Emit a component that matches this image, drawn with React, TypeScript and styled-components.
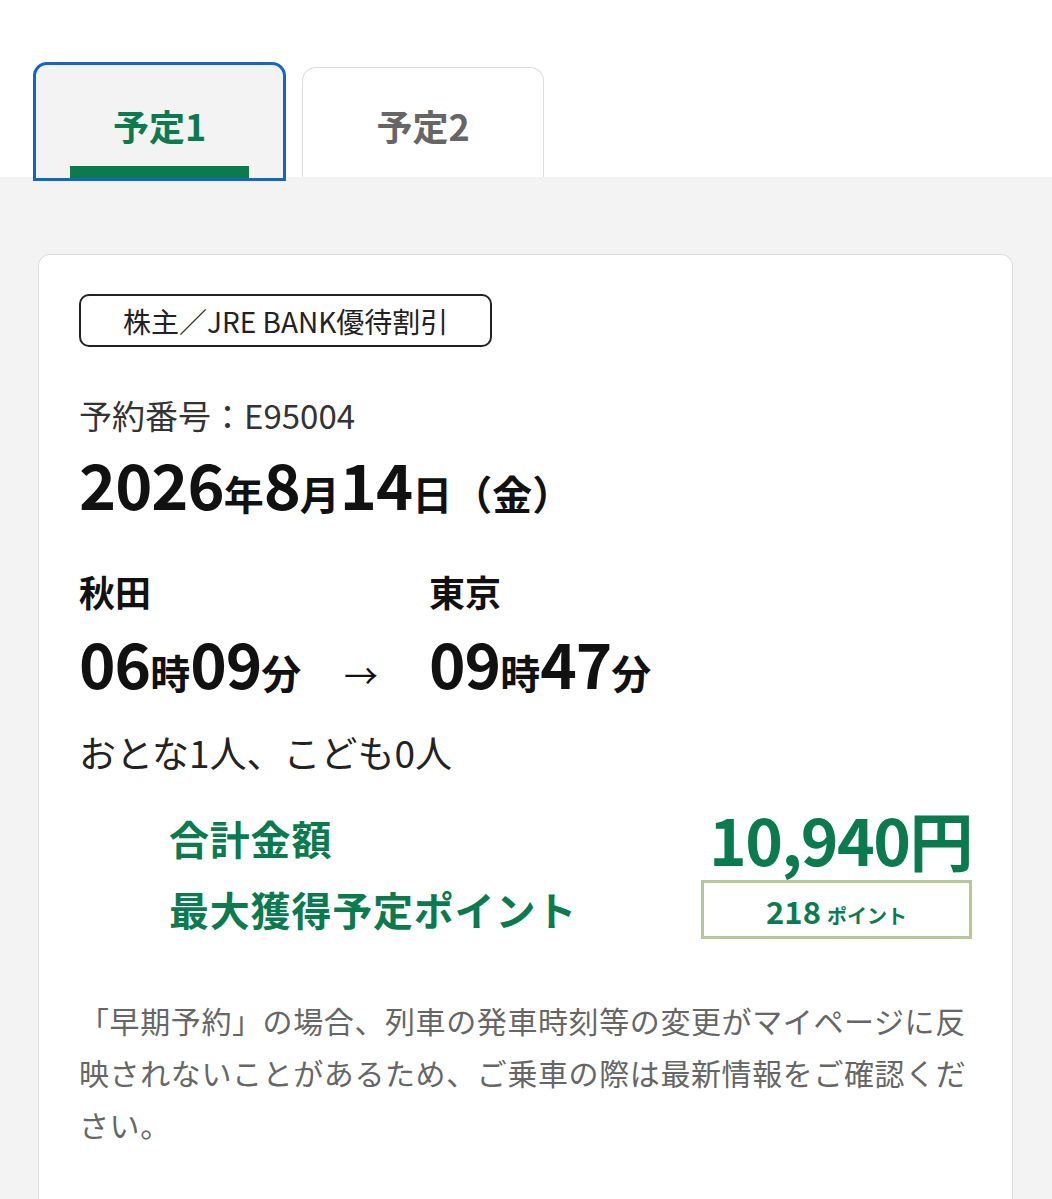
import styled, { createGlobalStyle } from "styled-components";

const GREEN = "#0b7a4f";
const FONT = `"Noto Sans CJK JP", "Noto Sans", sans-serif`;

const GlobalStyle = createGlobalStyle`
  html, body {
    margin: 0;
    padding: 0;
    background: #ffffff;
    font-family: ${FONT};
  }
`;

const Page = styled.div`
  width: 1052px;
  height: 1199px;
  background: #ffffff;
  overflow: hidden;
  display: flex;
  flex-direction: column;
`;

const TabBar = styled.ul`
  list-style: none;
  margin: 0;
  padding: 62px 0 0 33px;
  display: flex;
  align-items: flex-end;
  gap: 16px;
  height: 177px;
  box-sizing: border-box;
  flex-shrink: 0;
`;

const Tab = styled.li<{ $active?: boolean }>`
  position: relative;
  z-index: 1;
  box-sizing: border-box;
  display: flex;
  justify-content: center;
  align-items: center;
  width: ${(p) => (p.$active ? "253px" : "242px")};
  height: ${(p) => (p.$active ? "119px" : "110px")};
  margin-bottom: ${(p) => (p.$active ? "-4px" : "0")};
  padding-top: ${(p) => (p.$active ? "6px" : "4px")};
  border: ${(p) => (p.$active ? "3px solid #1466c6" : "1.5px solid #dcdcdc")};
  border-bottom-width: ${(p) => (p.$active ? "3px" : "0")};
  border-radius: 14px 14px 0 0;
  background: ${(p) => (p.$active ? "#f3f3f3" : "#ffffff")};
  color: ${(p) => (p.$active ? GREEN : "#666666")};
  font-size: 36px;
  font-weight: 700;

  .bar {
    position: absolute;
    left: 34px;
    right: 34px;
    bottom: 0;
    height: 12px;
    background: ${GREEN};
  }
`;

const Panel = styled.div`
  flex: 1;
  display: flex;
  flex-direction: column;
  background: #f3f3f3;
  padding: 77px 39px 0 38px;
`;

const Card = styled.section`
  flex: 1;
  background: #ffffff;
  border: 1.5px solid #dddddd;
  border-bottom: none;
  border-radius: 12px 12px 0 0;
  padding: 39px 40px 60px 40px;
  box-sizing: border-box;
  color: #111111;
`;

const Tag = styled.div`
  display: inline-flex;
  align-items: center;
  box-sizing: border-box;
  height: 53px;
  padding: 0 42px;
  border: 2px solid #222222;
  border-radius: 10px;
  font-size: 28px;
  color: #222222;
`;

const ReserveNo = styled.div`
  margin-top: 44px;
  font-size: 33px;
  line-height: 48px;
  color: #333333;
`;

const DateLine = styled.div`
  margin-top: 2px;
  font-weight: 700;
  line-height: 84px;
  display: flex;
  align-items: baseline;
`;

const Num = styled.span<{ $size: number }>`
  font-size: ${(p) => p.$size}px;
  font-weight: 700;
  letter-spacing: -1px;
`;

const Unit = styled.span<{ $size: number }>`
  font-size: ${(p) => p.$size}px;
  font-weight: 700;
`;

const Route = styled.div`
  margin-top: 26px;
  display: grid;
  grid-template-columns: 265px 85px auto;
  align-items: baseline;
`;

const Station = styled.div`
  font-size: 36px;
  font-weight: 700;
  line-height: 60px;
`;

const Time = styled.div`
  display: flex;
  align-items: baseline;
  line-height: 82px;
`;

const Arrow = styled.div`
  font-size: 34px;
  line-height: 82px;
`;

const People = styled.div`
  margin-top: 6px;
  font-size: 37px;
  line-height: 60px;
  color: #222222;
`;

const Totals = styled.div`
  margin-top: 21px;
  padding-left: 90px;
  display: grid;
  grid-template-columns: 1fr auto;
  align-items: center;
  row-gap: 6px;
  color: ${GREEN};
`;

const Label = styled.div`
  font-size: 40px;
  font-weight: 700;
  line-height: 60px;
  letter-spacing: 0.8px;
`;

const Price = styled.div`
  font-size: 64px;
  font-weight: 700;
  line-height: 70px;
  text-align: right;
  letter-spacing: -1.5px;
`;

const PointBox = styled.div`
  box-sizing: border-box;
  width: 271px;
  height: 59px;
  border: 3px solid #b7c796;
  display: flex;
  justify-content: center;
  align-items: baseline;
  gap: 6px;
  padding-top: 4px;

  .num {
    font-size: 31px;
    font-weight: 700;
    line-height: 48px;
  }

  .unit {
    font-size: 20px;
    font-weight: 700;
  }
`;

const Notice = styled.p`
  margin: 55px 0 0 0;
  font-size: 30px;
  line-height: 52px;
  letter-spacing: 0.6px;
  color: #666666;
`;

const App = () => {
  return (
    <Page>
      <GlobalStyle />
      <TabBar>
        <Tab $active>
          予定1
          <span className="bar"></span>
        </Tab>
        <Tab>予定2</Tab>
      </TabBar>

      <Panel>
        <Card>
          <Tag>株主／JRE BANK優待割引</Tag>

          <ReserveNo>予約番号：E95004</ReserveNo>

          <DateLine>
            <Num $size={63}>2026</Num>
            <Unit $size={40}>年</Unit>
            <Num $size={63}>8</Num>
            <Unit $size={40}>月</Unit>
            <Num $size={63}>14</Num>
            <Unit $size={40}>日（金）</Unit>
          </DateLine>

          <Route>
            <Station>秋田</Station>
            <div></div>
            <Station>東京</Station>

            <Time>
              <Num $size={62}>06</Num>
              <Unit $size={40}>時</Unit>
              <Num $size={62}>09</Num>
              <Unit $size={40}>分</Unit>
            </Time>
            <Arrow>→</Arrow>
            <Time>
              <Num $size={62}>09</Num>
              <Unit $size={40}>時</Unit>
              <Num $size={62}>47</Num>
              <Unit $size={40}>分</Unit>
            </Time>
          </Route>

          <People>おとな1人、こども0人</People>

          <Totals>
            <Label>合計金額</Label>
            <Price>10,940円</Price>
            <Label>最大獲得予定ポイント</Label>
            <PointBox>
              <span className="num">218</span>
              <span className="unit">ポイント</span>
            </PointBox>
          </Totals>

          <Notice>
            「早期予約」の場合、列車の発車時刻等の変更がマイページに反映されないことがあるため、ご乗車の際は最新情報をご確認ください。
          </Notice>
        </Card>
      </Panel>
    </Page>
  );
};

export default App;
